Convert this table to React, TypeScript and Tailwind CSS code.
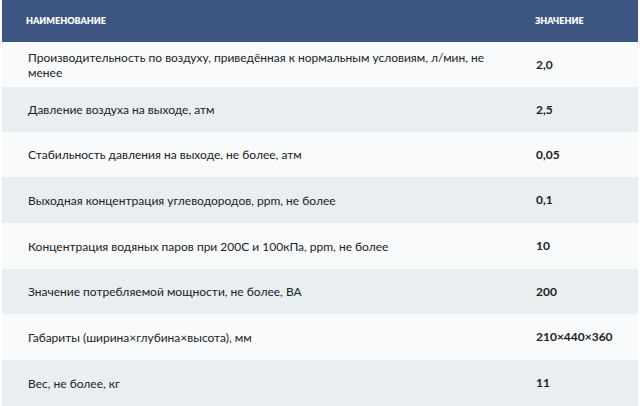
const rows = [
  { name: 'Производительность по воздуху, приведённая к нормальным условиям, л/мин, не менее', value: '2,0', h: 'h-[45px]' },
  { name: 'Давление воздуха на выходе, атм', value: '2,5', h: 'h-[45px]' },
  { name: 'Стабильность давления на выходе, не более, атм', value: '0,05', h: 'h-[45px]' },
  { name: 'Выходная концентрация углеводородов, ppm, не более', value: '0,1', h: 'h-[46px]' },
  { name: 'Концентрация водяных паров при 200С и 100кПа, ppm, не более', value: '10', h: 'h-[46px]' },
  { name: 'Значение потребляемой мощности, не более, ВА', value: '200', h: 'h-[45px]' },
  { name: 'Габариты (ширина×глубина×высота), мм', value: '210×440×360', h: 'h-[46px]' },
  { name: 'Вес, не более, кг', value: '11', h: 'h-[46px]' },
];

export default function App() {
  return (
    <div className="w-[640px] h-[406px] overflow-hidden bg-white px-[2px]" style={{ fontFamily: 'Lato, "Open Sans", sans-serif' }}>
      <div className="flex flex-col">
        {/* Header */}
        <div className="flex h-[42px] items-center bg-[#3c5581] text-white text-[9px] font-extrabold uppercase">
          <div className="w-[510px] pl-[24px]">Наименование</div>
          <div className="flex-1 pl-[23px]">Значение</div>
        </div>

        {rows.map((r, i) => (
          <div key={r.name} className={`flex items-center ${r.h} ${i % 2 === 0 ? 'bg-[#f8fafc]' : 'bg-[#e9eef1]'} text-[#222] text-[12px]`}>
            <div className="w-[510px] pl-[26px] pr-[18px] leading-[15px]">{r.name}</div>
            <div className="flex-1 pl-[24px] font-bold">{r.value}</div>
          </div>
        ))}
      </div>
    </div>
  );
}
